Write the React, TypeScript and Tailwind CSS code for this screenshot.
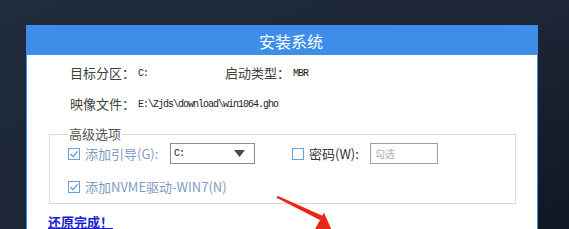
import React from 'react'

const cjk = { fontFamily: '"Noto Sans CJK SC", "Microsoft YaHei", sans-serif' }
const mono = { fontFamily: '"Liberation Mono", "Courier New", monospace' }

function CheckBox({ checked }: { checked: boolean }) {
  return (
    <span className="flex h-[12px] w-[12px] shrink-0 items-center justify-center border border-[#6a9fdc] bg-white">
      {checked && (
        <svg width="10" height="10" viewBox="0 0 10 10" fill="none">
          <path d="M1.5 5.2 L4 7.6 L8.6 2.4" stroke="#5b93d6" strokeWidth="1.3" />
        </svg>
      )}
    </span>
  )
}

export default function App() {
  return (
    <div className="relative h-[229px] w-[569px] overflow-hidden bg-gradient-to-br from-[#202b3b] via-[#1c2636] to-[#0f1723]">
      <div className="ml-[26px] mt-[25px] w-[512px] border border-[#3d8ee8] bg-white">
        {/* header */}
        <div className="flex h-[29px] items-center justify-center bg-[#3d8ee8] pl-[18px] text-[16px] text-white" style={cjk}>
          安装系统
        </div>

        <div className="pl-[43px] pt-[8px] text-[13px] text-[#404040]" style={cjk}>
          <div className="flex h-[20px] items-center">
            <span className="w-[68px]">目标分区：</span>
            <span className="w-[87px] text-[10px] tracking-[-1px] text-[#222]" style={mono}>C:</span>
            <span className="w-[68px]">启动类型：</span>
            <span className="text-[10px] tracking-[-1px] text-[#222]" style={mono}>MBR</span>
          </div>
          <div className="mt-[11px] flex h-[20px] items-center">
            <span className="w-[68px]">映像文件：</span>
            <span className="text-[10px] tracking-[-1px] text-[#222]" style={mono}>E:\Zjds\download\win1064.gho</span>
          </div>
        </div>

        {/* advanced options */}
        <fieldset className="ml-[22px] mr-[21px] mt-[12px] border border-[#dadada] px-[18px] pb-[6px]" style={cjk}>
          <legend className="px-[1px] text-[13px] leading-[16px] text-[#555]">高级选项</legend>
          <div className="mt-[1px] flex h-[21px] items-center text-[13px]">
            <CheckBox checked />
            <span className="ml-[5px] w-[80px] text-[#7f9cc3]">添加引导(G):</span>
            <div className="ml-[5px] flex h-[21px] w-[85px] items-center justify-between border border-[#8c8c8c] pl-[3px] pr-[9px]">
              <span className="text-[10px] tracking-[-1px] text-[#222]" style={mono}>C:</span>
              <svg width="11" height="7" viewBox="0 0 11 7">
                <path d="M0 0 H11 L5.5 7 Z" fill="#4a4a4a" />
              </svg>
            </div>
            <span className="ml-[37px]">
              <CheckBox checked={false} />
            </span>
            <span className="ml-[5px] w-[61px] text-[#333]">密码(W):</span>
            <div className="flex h-[21px] w-[68px] items-center border border-[#a0a0a0] pl-[4px] text-[10px] text-[#b0b0b0]">
              勾选
            </div>
          </div>
          <div className="mt-[13px] flex h-[20px] items-center text-[13px]">
            <CheckBox checked />
            <span className="ml-[5px] text-[#7f9cc3]">添加NVME驱动-WIN7(N)</span>
          </div>
        </fieldset>

        <div className="ml-[21px] mt-[8px] h-[40px] text-[13px] font-bold text-[#1c1ccf] underline" style={cjk}>
          还原完成！
        </div>
      </div>

      {/* red arrow */}
      <svg className="absolute left-0 top-0" width="569" height="229" viewBox="0 0 569 229">
        <polygon points="276,197.5 278,196 323,216 320,220" fill="#e8261c" />
        <polygon points="313,233 324,212.5 336,240" fill="#e8261c" />
      </svg>
    </div>
  )
}
